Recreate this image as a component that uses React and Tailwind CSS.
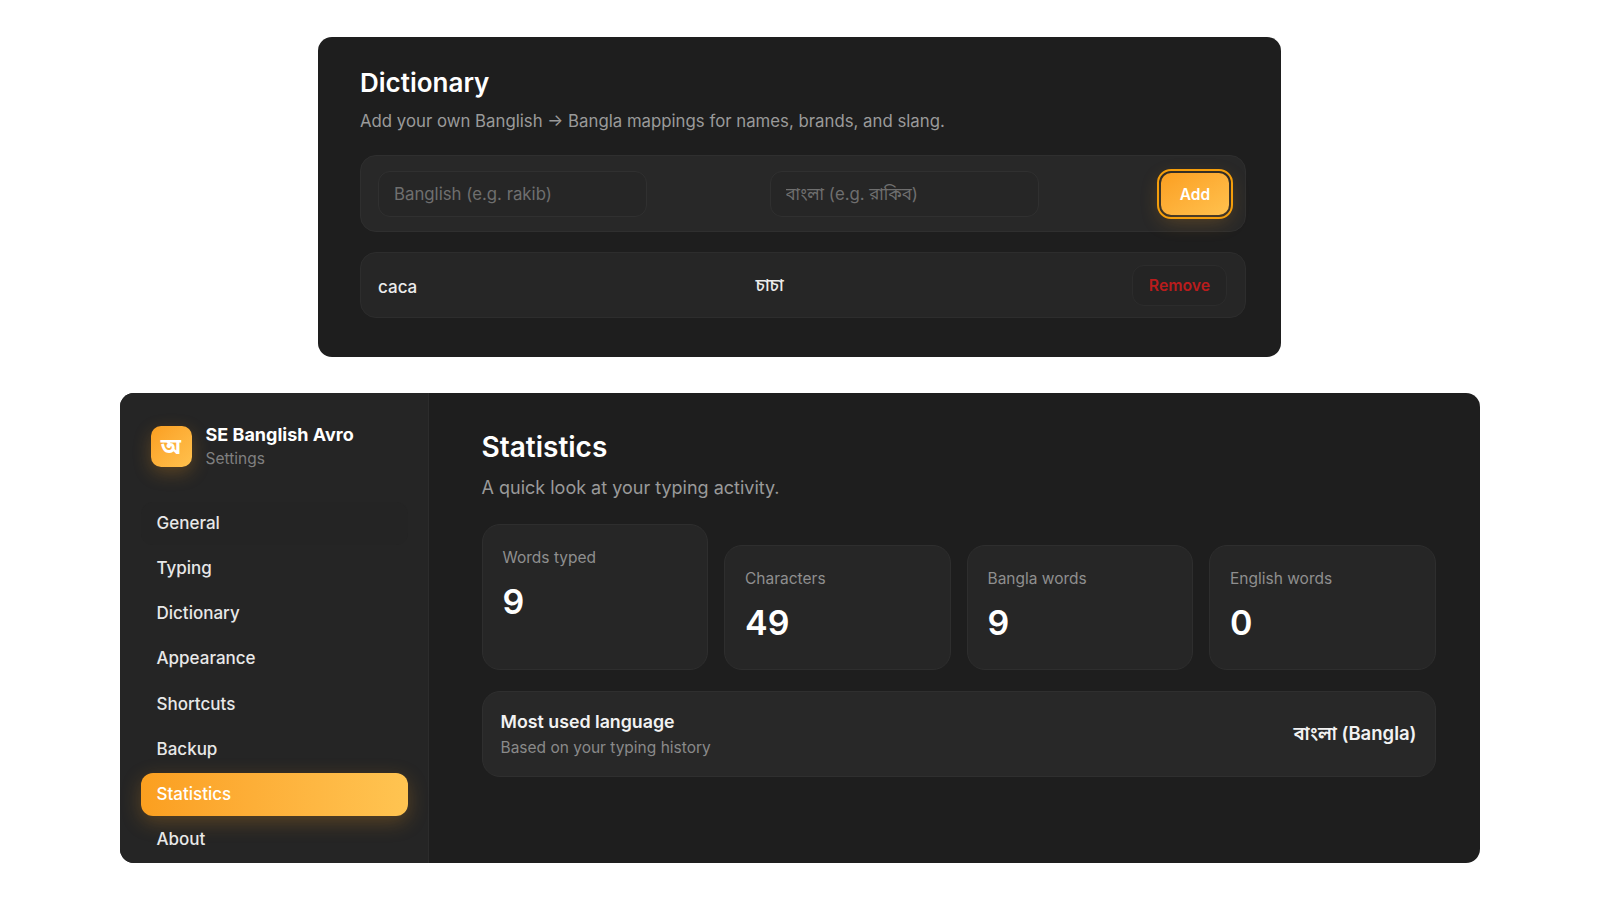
import React from "react";

const navItems = ["General", "Typing", "Dictionary", "Appearance", "Shortcuts", "Backup", "Statistics", "About"];

const stats = [
  { label: "Words typed", value: "9", first: true },
  { label: "Characters", value: "49" },
  { label: "Bangla words", value: "9" },
  { label: "English words", value: "0" },
];

const fontStack = "font-['Inter','Noto_Sans','Noto_Sans_Bengali','Lohit_Bengali','FreeSans',sans-serif]";

const StatCard = ({ label, value, first }) => (
  <div
    className={`${first ? "h-[146px]" : "h-[125px]"} rounded-[18px] border border-[#2e2e2e] bg-[#262626] px-5 pt-[22px]`}
  >
    <p className="text-[15.5px] leading-[21px] text-[#8f8f8f]">{label}</p>
    <p className="mt-[13px] text-[34px] leading-[42px] font-semibold text-white">{value}</p>
  </div>
);

export default function App() {
  return (
    <div className={`${fontStack} flex min-h-screen flex-col items-center gap-9 bg-white pt-[37px] pr-px`}>
      <section className="w-[963px] rounded-[14px] bg-[#1e1e1e] pt-[28px] pr-[35px] pb-[39px] pl-[42px]">
        <h2 className="text-[26px] leading-9 font-semibold text-white">Dictionary</h2>
        <p className="mt-2 text-[16.8px] leading-6 text-[#9a9a9a]">
          Add your own Banglish → Bangla mappings for names, brands, and slang.
        </p>
        <div className="mt-[22px] flex h-[77px] items-center justify-between rounded-2xl border border-[#2f2f2f] bg-[#282828] pr-4 pl-[17px]">
          <input
            placeholder="Banglish (e.g. rakib)"
            className="h-[46px] w-[269px] rounded-xl border border-[#303030] bg-[#262626] px-[15px] text-[16.8px] outline-none placeholder:text-[#6f6f6f]"
          />
          <input
            placeholder="বাংলা (e.g. রাকিব)"
            className="h-[46px] w-[269px] rounded-xl border border-[#303030] bg-[#262626] px-[15px] text-[16.8px] outline-none placeholder:text-[#6f6f6f]"
          />
          <button className="h-[42px] w-[68px] rounded-[10px] bg-gradient-to-br from-[#fb9f1f] to-[#ffc14d] pt-[2px] text-[15.5px] font-semibold text-white shadow-[0_6px_20px_rgba(251,159,31,0.25)] outline-2 outline-offset-2 outline-[#f59e0b]">
            Add
          </button>
        </div>
        <div className="mt-5 flex h-[66px] items-center justify-between rounded-2xl border border-[#2d2d2d] bg-[#262626] pr-[18px] pl-[17px]">
          <span className="mt-[6px] text-[17px] font-medium text-[#ececec]">caca</span>
          <span className="mr-[10px] text-[17.5px] font-medium text-[#ececec]">চাচা</span>
          <button className="h-[41px] w-[95px] rounded-xl border border-[#2c2c2c] bg-[#242424] pt-[2px] text-[15.8px] font-semibold text-[#b91c1c]">
            Remove
          </button>
        </div>
      </section>

      <section className="flex h-[470px] w-[1360px] overflow-hidden rounded-[14px] bg-[#1e1e1e]">
        <aside className="flex w-[309px] shrink-0 flex-col border-r border-[#2c2c2c] bg-[#252525] pt-[30px] pr-5 pl-[21px]">
          <div className="flex items-center gap-[13px] pl-[10px]">
            <div className="mb-[2px] flex h-[41px] w-[41px] items-center justify-center rounded-[10px] bg-gradient-to-br from-[#fb9f1f] to-[#ffc14d] text-[22px] font-bold text-white shadow-[0_6px_18px_rgba(251,159,31,0.25)]">
              অ
            </div>
            <div className="pl-px">
              <p className="text-[18px] leading-6 font-bold text-white">SE Banglish Avro</p>
              <p className="text-[15.5px] leading-6 text-[#808080]">Settings</p>
            </div>
          </div>
          <nav className="mt-[31px] flex flex-col gap-[2.2px]">
            {navItems.map((item) => (
              <div
                key={item}
                className={`flex h-[43px] shrink-0 items-center rounded-xl px-4 text-[17px] font-medium ${
                  item === "Statistics"
                    ? "bg-gradient-to-r from-[#fb9f1f] to-[#ffc451] text-white shadow-[0_6px_20px_rgba(251,159,31,0.25)]"
                    : item === "General"
                      ? "bg-[#242424] text-[#e8e8e8]"
                      : "text-[#e8e8e8]"
                }`}
              >
                {item}
              </div>
            ))}
          </nav>
        </aside>

        <main className="min-w-0 flex-1 pt-[33px] pr-[44px] pl-[53px]">
          <h1 className="text-[28px] leading-[42px] font-semibold text-white">Statistics</h1>
          <p className="mt-2 text-[18px] leading-6 text-[#9a9a9a]">A quick look at your typing activity.</p>
          <div className="mt-6 grid grid-cols-4 items-end gap-4">
            {stats.map((stat) => (
              <StatCard key={stat.label} {...stat} />
            ))}
          </div>
          <div className="mt-[21px] flex h-[86px] items-center justify-between rounded-[18px] border border-[#2f2f2f] bg-[#282828] pr-[18px] pl-[18px]">
            <div className="pt-[2px]">
              <p className="text-[17.8px] leading-[26px] font-semibold text-[#f2f2f2]">Most used language</p>
              <p className="text-[15.5px] leading-[26px] text-[#8a8a8a]">Based on your typing history</p>
            </div>
            <p className="text-[18.5px] font-semibold text-[#f2f2f2]">বাংলা (Bangla)</p>
          </div>
        </main>
      </section>
    </div>
  );
}
